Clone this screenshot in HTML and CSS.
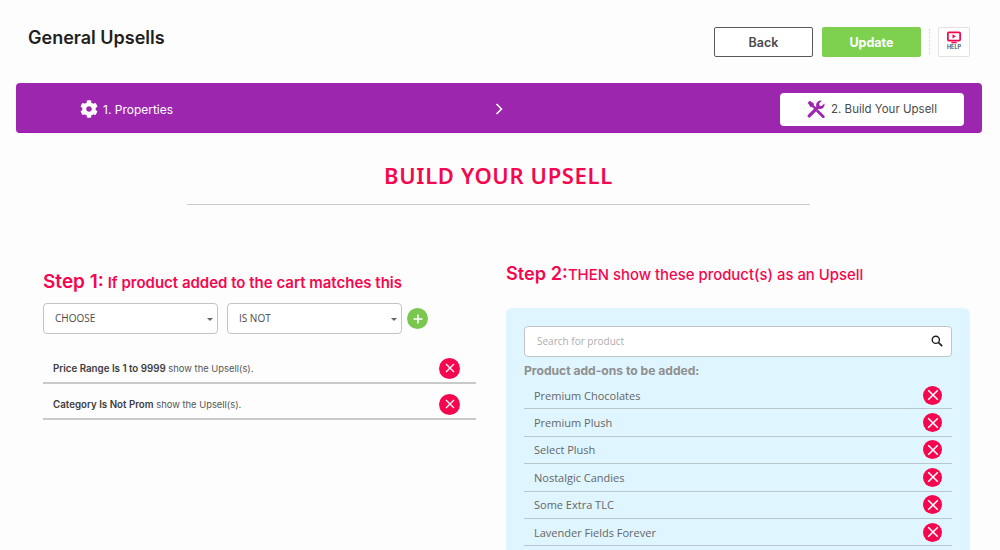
FILE: index.html
```html
<!DOCTYPE html>
<html lang="en">
<head>
<meta charset="utf-8">
<title>General Upsells</title>
<link rel="stylesheet" href="styles.css">
</head>
<body>
<div class="page">
  <header class="top">
    <h1 class="title">General Upsells</h1>
    <div class="actions">
      <button class="btn btn-back">Back</button>
      <button class="btn btn-update">Update</button>
      <span class="sep"></span>
      <button class="help">
        <svg class="help-icon" viewBox="0 0 16 14" width="14" height="13"><rect x="1" y="1" width="14" height="9.5" rx="1.2" fill="none" stroke="#f5074f" stroke-width="2"/><path d="M6.3 3.4v4.6l3.9-2.3z" fill="#f5074f"/><path d="M5 12.8h6" stroke="#f5074f" stroke-width="1.6"/></svg>
        <span class="help-text">HELP</span>
      </button>
    </div>
  </header>

  <nav class="steps">
    <div class="step-a">
      <svg class="gear" viewBox="0 0 512 512" width="18" height="18"><path fill="#fff" d="M487.4 315.7l-42.6-24.6c4.3-23.2 4.3-47 0-70.2l42.6-24.6c4.9-2.8 7.1-8.6 5.5-14-11.1-35.6-30-67.8-54.7-94.6-3.8-4.1-10-5.1-14.8-2.3L380.8 110c-17.9-15.4-38.5-27.3-60.8-35.1V25.8c0-5.6-3.9-10.5-9.4-11.7-36.7-8.2-74.3-7.8-109.2 0-5.5 1.2-9.4 6.1-9.4 11.7V75c-22.2 7.9-42.8 19.8-60.8 35.1L88.7 85.5c-4.9-2.8-11-1.9-14.8 2.3-24.7 26.7-43.6 58.9-54.7 94.6-1.7 5.4.6 11.2 5.5 14L67.3 221c-4.3 23.2-4.3 47 0 70.2l-42.6 24.6c-4.9 2.8-7.1 8.6-5.5 14 11.1 35.6 30 67.8 54.7 94.6 3.8 4.1 10 5.1 14.8 2.3l42.6-24.6c17.9 15.4 38.5 27.3 60.8 35.1v49.2c0 5.6 3.9 10.5 9.4 11.7 36.7 8.2 74.3 7.8 109.2 0 5.5-1.2 9.4-6.1 9.4-11.7v-49.2c22.2-7.9 42.8-19.8 60.8-35.1l42.6 24.6c4.9 2.8 11 1.9 14.8-2.3 24.7-26.7 43.6-58.9 54.7-94.6 1.5-5.5-.7-11.3-5.6-14.1zM256 336c-44.1 0-80-35.9-80-80s35.9-80 80-80 80 35.9 80 80-35.9 80-80 80z"/></svg>
      <span>1. Properties</span>
    </div>
    <svg class="chev" viewBox="0 0 8 12" width="8" height="12"><path d="M1.5 1l5 5-5 5" fill="none" stroke="#fff" stroke-width="1.6"/></svg>
    <div class="step-b">
      <svg class="tools" viewBox="0 0 20 20" width="18" height="18"><path fill="#9c27ae" d="M1.2 16.4 10.4 7.2a5 5 0 0 1 .9-4.8A5 5 0 0 1 16.4.9l-3 3 .5 2.4 2.4.5 3-3a5 5 0 0 1-1.5 5.1 5 5 0 0 1-4.8.9l-9.2 9.2a1.7 1.7 0 0 1-2.6-2.6z"/><path fill="#9c27ae" d="M.8 3 3 .8l4.6 3.1v1.8l2.9 2.9-2 2-2.9-2.9H3.9zM12.2 10.6l7 7a1.6 1.6 0 0 1 0 2.2 1.6 1.6 0 0 1-2.2 0l-7-7z"/></svg>
      <span>2. Build Your Upsell</span>
    </div>
  </nav>

  <div class="heading">
    <h2 class="heading-text">BUILD YOUR UPSELL</h2>
  </div>

  <div class="columns">
    <section class="col-left">
      <h3 class="step-title"><span class="step-big">Step 1:</span> If product added to the cart matches this</h3>
      <div class="filters">
        <div class="select">CHOOSE<span class="caret"></span></div>
        <div class="select">IS NOT<span class="caret"></span></div>
        <button class="add"><svg viewBox="0 0 10 10" width="10" height="10"><path d="M5 .5v9M.5 5h9" stroke="#fff" stroke-width="1.6"/></svg></button>
      </div>
      <ul class="rules">
        <li class="rule"><span><b>Price Range Is 1 to 9999</b> show the Upsell(s).</span><span class="x x-small"><svg viewBox="0 0 10 10" width="10" height="10"><path d="M1 1l8 8M9 1l-8 8" stroke="#fff" stroke-width="1.3"/></svg></span></li>
        <li class="rule"><span><b>Category Is Not Prom</b> show the Upsell(s).</span><span class="x x-small"><svg viewBox="0 0 10 10" width="10" height="10"><path d="M1 1l8 8M9 1l-8 8" stroke="#fff" stroke-width="1.3"/></svg></span></li>
      </ul>
    </section>

    <section class="col-right">
      <h3 class="step-title step-title-2"><span class="step-big">Step 2:</span>THEN show these product(s) as an Upsell</h3>
      <div class="panel">
        <div class="search">
          <span>Search for product</span>
          <svg viewBox="0 0 12 12" width="12" height="12"><circle cx="4.8" cy="4.8" r="3.6" fill="none" stroke="#222" stroke-width="1.4"/><path d="M7.6 7.6l3.6 3.6" stroke="#222" stroke-width="1.7"/></svg>
        </div>
        <div class="added">Product add-ons to be added:</div>
        <ul class="products">
          <li class="product">Premium Chocolates<span class="x"><svg viewBox="0 0 10 10" width="12" height="12"><path d="M1 1l8 8M9 1l-8 8" stroke="#fff" stroke-width="1.3"/></svg></span></li>
          <li class="product">Premium Plush<span class="x"><svg viewBox="0 0 10 10" width="12" height="12"><path d="M1 1l8 8M9 1l-8 8" stroke="#fff" stroke-width="1.3"/></svg></span></li>
          <li class="product">Select Plush<span class="x"><svg viewBox="0 0 10 10" width="12" height="12"><path d="M1 1l8 8M9 1l-8 8" stroke="#fff" stroke-width="1.3"/></svg></span></li>
          <li class="product">Nostalgic Candies<span class="x"><svg viewBox="0 0 10 10" width="12" height="12"><path d="M1 1l8 8M9 1l-8 8" stroke="#fff" stroke-width="1.3"/></svg></span></li>
          <li class="product">Some Extra TLC<span class="x"><svg viewBox="0 0 10 10" width="12" height="12"><path d="M1 1l8 8M9 1l-8 8" stroke="#fff" stroke-width="1.3"/></svg></span></li>
          <li class="product">Lavender Fields Forever<span class="x"><svg viewBox="0 0 10 10" width="12" height="12"><path d="M1 1l8 8M9 1l-8 8" stroke="#fff" stroke-width="1.3"/></svg></span></li>
        </ul>
      </div>
    </section>
  </div>
</div>
</body>
</html>
```
FILE: styles.css
```css
* { box-sizing: border-box; }
html, body { margin: 0; padding: 0; height: 550px; overflow: hidden; background: #fdfdfd; }
body { font-family: Inter, "Noto Sans", sans-serif; color: #4a4a4a; }
ul { list-style: none; margin: 0; padding: 0; }
h1, h2, h3 { margin: 0; }
button { font-family: inherit; cursor: pointer; }

.page { width: 1000px; height: 550px; overflow: hidden; }

.top { display: flex; justify-content: space-between; align-items: flex-start; height: 83px; padding: 27px 30px 0 28px; }
.title { font-size: 18px; line-height: 22px; font-weight: 600; color: #1f1f1f; }
.actions { display: flex; align-items: center; }
.btn { width: 99px; height: 30px; border-radius: 2px; font-size: 12.5px; font-weight: 600; padding: 0; }
.btn-back { background: #fff; border: 1px solid #555a60; color: #4a4a4a; }
.btn-update { background: #7ed14f; border: 0; color: #fff; margin-left: 9px; font-weight: 700; }
.sep { width: 0; height: 26px; border-left: 1px dotted #d5cfd3; margin: 0 8px; }
.help { width: 32px; height: 30px; padding: 3px 0 0; background: #fff; border: 1px solid #e6e0e3; border-radius: 2px; display: flex; flex-direction: column; align-items: center; }
.help-icon { display: block; }
.help-text { font-size: 5.5px; line-height: 7px; font-weight: 600; color: #444; }

.steps { display: flex; align-items: center; width: 966px; height: 50px; margin-left: 16px; padding: 3px 18px 0 64px; background: #9c27ae; border-radius: 4px; border-bottom: 1px solid #a012b4; }
.step-a { display: flex; align-items: center; gap: 5px; width: 415px; color: #fff; font-size: 12px; }
.chev { flex: none; }
.step-b { display: flex; align-items: center; justify-content: center; gap: 6px; width: 184px; height: 33px; margin-left: auto; background: #fff; border-radius: 4px; font-size: 11.5px; color: #4a4a4a; }

.heading { width: 623px; height: 72px; margin-left: 187px; border-bottom: 1px solid #c5cbd0; padding-top: 27px; text-align: center; }
.heading-text { font-family: "Noto Sans", sans-serif; font-size: 22px; line-height: 30px; font-weight: 600; letter-spacing: .65px; color: #f5074f; }

.columns { display: flex; padding: 0 30px 0 43px; }
.col-left { width: 433px; padding-top: 64px; }
.col-right { width: 464px; margin-left: 30px; padding-top: 55px; }

.step-title { font-size: 15px; line-height: 26px; font-weight: 600; color: #f5074f; white-space: nowrap; }
.step-big { font-size: 19px; }
.filters { display: flex; align-items: center; margin-top: 7px; }
.select { position: relative; width: 175px; height: 31px; margin-right: 9px; padding-left: 11px; background: #fff; border: 1px solid #c4c4c4; border-radius: 4px; font-family: "Open Sans", sans-serif; font-size: 10px; line-height: 29px; color: #4a4a4a; }
.caret { position: absolute; right: 4px; top: 14px; border: 3px solid transparent; border-top: 3px solid #666; border-bottom: 0; }
.add { width: 21px; height: 21px; margin-left: -4px; padding: 0; border: 0; border-radius: 50%; background: #7ac74f; display: flex; align-items: center; justify-content: center; }

.rules { margin-top: 14px; }
.rule { display: flex; align-items: center; justify-content: space-between; height: 36px; padding: 6px 16px 0 10px; border-bottom: 2px solid #c9c9c9; font-size: 9.4px; color: #555; }
.rule b { font-size: 9.75px; font-weight: 600; color: #3c3c3c; }

.x { display: flex; align-items: center; justify-content: center; width: 19px; height: 19px; border-radius: 50%; background: #f5074f; }
.x-small { width: 21px; height: 21px; }

.step-title-2 { font-size: 14.9px; font-weight: 500; }
.step-title-2 .step-big { font-size: 18.2px; font-weight: 600; }
.panel { height: 300px; margin-top: 20px; padding: 18px 18px 0; background: #dff5ff; border-radius: 6px; }
.search { display: flex; align-items: center; justify-content: space-between; height: 31px; padding: 0 8px 1px 12px; background: #fff; border: 1px solid #bfc5c9; border-radius: 4px; font-family: "Open Sans", sans-serif; font-size: 10px; color: #aeaeae; }
.added { margin-top: 5px; font-size: 12.1px; line-height: 18px; font-weight: 700; color: #8f8f8f; }
.products { margin-top: 2px; }
.product { display: flex; align-items: center; justify-content: space-between; height: 27.4px; padding: 0 10px; border-bottom: 1.5px solid #b9c7cc; font-family: "Open Sans", sans-serif; font-size: 11px; color: #666; }
```
